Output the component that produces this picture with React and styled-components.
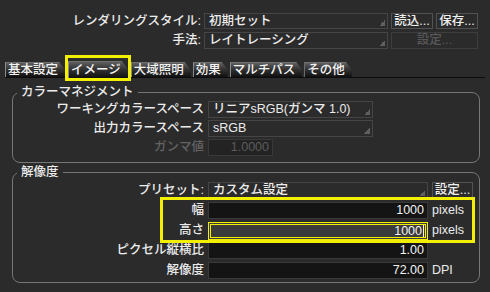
import styled, { createGlobalStyle, css } from "styled-components";

const GlobalStyle = createGlobalStyle`
  html, body {
    margin: 0;
    padding: 0;
    background: #2b2b2b;
  }
  body {
    width: 490px;
    height: 292px;
    overflow: hidden;
    font-family: "Liberation Sans", "Noto Sans CJK JP", sans-serif;
    font-size: 12.5px;
    font-weight: 500;
    color: #ececec;
  }
  * { box-sizing: border-box; }
`;

const HIGHLIGHT = "#f3ef00";

const Panel = styled.div`
  width: 490px;
  height: 292px;
  padding-top: 13px;
`;

const TopForm = styled.div`
  display: grid;
  grid-template-columns: 201px 184px 42px 42px;
  grid-template-rows: 16px 17px;
  column-gap: 3px;
  row-gap: 3px;
`;

const Label = styled.div`
  text-align: right;
  white-space: nowrap;
  line-height: ${(p) => p.$h || 17}px;
  color: ${(p) => (p.$disabled ? "#626262" : "#ececec")};
`;

const Dropdown = styled.div`
  position: relative;
  height: 100%;
  border: 1px solid #454545;
  background: #2b2b2b;
  padding-left: 4px;
  line-height: 15px;
  white-space: nowrap;
  overflow: hidden;
  &::after {
    content: "";
    position: absolute;
    right: 2px;
    bottom: 2px;
    width: 6px;
    height: 6px;
    background: linear-gradient(135deg, transparent 50%, #5f5f5f 50%);
  }
`;

const Button = styled.div`
  height: 100%;
  border: 1px solid ${(p) => (p.$disabled ? "#3d3d3d" : "#525252")};
  color: ${(p) => (p.$disabled ? "#585858" : "#f0f0f0")};
  text-align: center;
  line-height: 15px;
  white-space: nowrap;
  grid-column: ${(p) => (p.$wide ? "span 2" : "auto")};
`;

const TabBar = styled.div`
  display: flex;
  align-items: flex-end;
  gap: 2px;
  height: 16px;
  margin: 13px 5px 0 5px;
  border-bottom: 1px solid #0c0c0c;
`;

const Tab = styled.div`
  height: ${(p) => (p.$active ? 17 : 15)}px;
  padding: 0 7px 0 2px;
  line-height: ${(p) => (p.$active ? 16 : 14)}px;
  white-space: nowrap;
  color: #f4f4f4;
  background: linear-gradient(#5e5e5e, #333 45%, #101010);
  border-left: 1px solid #8a8a8a;
  border-top: 1px solid #707070;
  clip-path: polygon(0 0, calc(100% - 6px) 0, 100% 8px, 100% 100%, 0 100%);
`;

const TabMark = styled.div`
  padding-top: 3px;
  outline: 3px solid ${HIGHLIGHT};
  outline-offset: 0;
  margin: 0 1px -1px 1px;
`;

const Group = styled.fieldset`
  margin: ${(p) => p.$top}px 10px 0 12px;
  padding: ${(p) => p.$pt}px 0 ${(p) => p.$pb}px 0;
  border: 1px solid #767676;
  border-radius: 8px;
  min-width: 0;
`;

const Legend = styled.legend`
  margin-left: 4px;
  padding: 0 4px;
  line-height: 16px;
  color: #ececec;
`;

const Rows = styled.div`
  display: flex;
  flex-direction: column;
  gap: ${(p) => p.$gap}px;
  position: relative;
`;

const Row = styled.div`
  display: grid;
  grid-template-columns: 191px ${(p) => p.$w}px auto;
  column-gap: 4px;
  height: 17px;
  align-items: stretch;
`;

const Field = styled.div`
  border: 1px solid #393939;
  background: ${(p) => (p.$disabled ? "#232323" : "#141414")};
  color: ${(p) => (p.$disabled ? "#5c5c5c" : "#f2f2f2")};
  text-align: right;
  padding-right: 3px;
  line-height: 15px;
  ${(p) =>
    p.$focused &&
    css`
      border: 3px double ${HIGHLIGHT};
      background: #3b3b3b;
      padding-right: 1px;
      line-height: 11px;
    `}
`;

const Caret = styled.span`
  display: inline-block;
  width: 1px;
  height: 12px;
  margin-left: 1px;
  vertical-align: -2px;
  background: #f2f2f2;
`;

const Unit = styled.div`
  line-height: 17px;
  color: #ececec;
`;

const Marked = styled(Rows)`
  &::after {
    content: "";
    position: absolute;
    left: 147px;
    right: 4px;
    top: -5px;
    bottom: -4px;
    border: 3px solid ${HIGHLIGHT};
    pointer-events: none;
  }
`;

const tabs = ["基本設定", "イメージ", "大域照明", "効果", "マルチパス", "その他"];

export default function App() {
  return (
    <Panel>
      <GlobalStyle />
      <TopForm>
        <Label $h={16}>レンダリングスタイル:</Label>
        <Dropdown>初期セット</Dropdown>
        <Button>読込...</Button>
        <Button>保存...</Button>
        <Label>手法:</Label>
        <Dropdown>レイトレーシング</Dropdown>
        <Button $wide $disabled>
          設定...
        </Button>
      </TopForm>

      <TabBar>
        {tabs.map((t) =>
          t === "イメージ" ? (
            <TabMark key={t}>
              <Tab $active>{t}</Tab>
            </TabMark>
          ) : (
            <Tab key={t}>{t}</Tab>
          )
        )}
      </TabBar>

      <Group $top={6} $pt={1} $pb={6}>
        <Legend>カラーマネジメント</Legend>
        <Rows $gap={2}>
          <Row $w={165}>
            <Label>ワーキングカラースペース</Label>
            <Dropdown>リニアsRGB(ガンマ 1.0)</Dropdown>
          </Row>
          <Row $w={165}>
            <Label>出力カラースペース</Label>
            <Dropdown>sRGB</Dropdown>
          </Row>
          <Row $w={65}>
            <Label $disabled>ガンマ値</Label>
            <Field $disabled>1.0000</Field>
          </Row>
        </Rows>
      </Group>

      <Group $top={1} $pt={2} $pb={3}>
        <Legend>解像度</Legend>
        <Rows $gap={3}>
          <Row $w={220}>
            <Label>プリセット:</Label>
            <Dropdown>カスタム設定</Dropdown>
            <Button style={{ width: 41 }}>設定...</Button>
          </Row>
          <Marked $gap={3}>
            <Row $w={220}>
              <Label>幅</Label>
              <Field>1000</Field>
              <Unit>pixels</Unit>
            </Row>
            <Row $w={220}>
              <Label>高さ</Label>
              <Field $focused>
                1000
                <Caret />
              </Field>
              <Unit>pixels</Unit>
            </Row>
          </Marked>
          <Row $w={220}>
            <Label>ピクセル縦横比</Label>
            <Field>1.00</Field>
          </Row>
          <Row $w={220}>
            <Label>解像度</Label>
            <Field>72.00</Field>
            <Unit>DPI</Unit>
          </Row>
        </Rows>
      </Group>
    </Panel>
  );
}
